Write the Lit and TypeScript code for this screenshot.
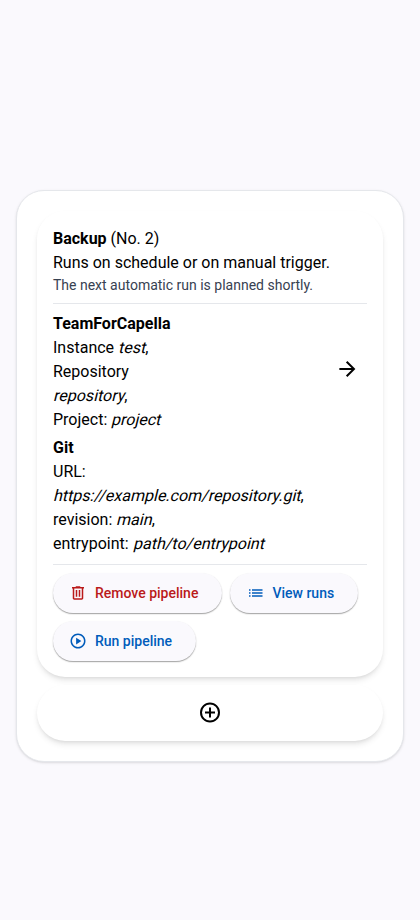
import { LitElement, html, css } from "lit";
import { customElement } from "lit/decorators.js";

@customElement("app-root")
export class AppRoot extends LitElement {
  static styles = css`
    :host {
      display: flex;
      flex-direction: column;
      justify-content: center;
      box-sizing: border-box;
      height: 920px;
      padding: 32px 16px 0;
      background: #faf9fd;
      color: #000;
      font: 16px/24px Roboto, sans-serif;
    }
    * { box-sizing: border-box; }
    .dialog {
      border: 1px solid #e5e7eb;
      border-radius: 28px;
      background: #fff;
      padding: 20px;
      box-shadow: 0 1px 3px rgba(0, 0, 0, 0.1), 0 1px 2px -1px rgba(0, 0, 0, 0.1);
    }
    .card {
      border-radius: 28px;
      padding: 16px;
      background: #fff;
      box-shadow: 0 4px 6px -1px rgba(0, 0, 0, 0.1), 0 2px 4px -2px rgba(0, 0, 0, 0.1);
    }
    .small { font-size: 14px; line-height: 20px; color: #374151; }
    .flow {
      margin: 8px 0;
      padding: 8px 0;
      border-top: 1px solid #e5e7eb;
      border-bottom: 1px solid #e5e7eb;
    }
    .source {
      display: flex;
      align-items: center;
      justify-content: space-between;
      padding-right: 8px;
    }
    .source + .source { margin-top: 4px; }
    .source svg { margin-bottom: 6px; }
    b { font-weight: 700; }
    i {
      display: inline-block;
      font-style: normal;
      transform: skewX(-14deg);
      transform-origin: 0 17px;
    }
    svg { display: block; width: 24px; height: 24px; fill: currentColor; }
    .actions { display: flex; flex-wrap: wrap; gap: 8px; }
    button {
      display: flex;
      align-items: center;
      gap: 8px;
      height: 40px;
      border: 0;
      border-radius: 20px;
      padding: 0 24px 0 16px;
      background: #faf9fd;
      color: #005cbb;
      font: 500 14px/20px Roboto, sans-serif;
      box-shadow: 0 1px 1px rgba(0, 0, 0, 0.28), 0 1px 2px rgba(0, 0, 0, 0.12);
    }
    button svg { width: 18px; height: 18px; }
    .danger { color: #ba1a1a; }
    .add { display: flex; justify-content: center; margin-top: 8px; }
  `;

  render() {
    return html`
      <div class="dialog">
        <div class="card">
          <div><b>Backup</b> (No. 2)</div>
          <div>Runs on schedule or on manual trigger.</div>
          <div class="small">The next automatic run is planned shortly.</div>
          <div class="flow">
            <div class="source">
              <div>
                <b>TeamForCapella</b><br />Instance <i>test</i>,<br />Repository<br /><i>repository</i>,<br />Project: <i>project</i>
              </div>
              <svg viewBox="-15 -960 960 960"><path d="M647-440H160v-80h487L423-744l57-56 320 320-320 320-57-56 224-224Z" /></svg>
            </div>
            <div class="source">
              <div>
                <b>Git</b><br />URL:<br /><i>https://example.com/repository.git</i>,<br />revision: <i>main</i>,<br />entrypoint: <i>path/to/entrypoint</i>
              </div>
            </div>
          </div>
          <div class="actions">
            <button class="danger">
              <svg viewBox="0 -960 960 960"><path d="M280-120q-33 0-56.500-23.500T200-200v-520h-40v-80h200v-40h240v40h200v80h-40v520q0 33-23.500 56.500T680-120H280Zm400-600H280v520h400v-520ZM360-280h80v-360h-80v360Zm160 0h80v-360h-80v360ZM280-720v520-520Z" /></svg>
              Remove pipeline
            </button>
            <button>
              <svg viewBox="-40 -960 960 960"><path d="M280-600v-80h560v80H280Zm0 160v-80h560v80H280Zm0 160v-80h560v80H280ZM120-600v-80h80v80h-80Zm0 160v-80h80v80h-80Zm0 160v-80h80v80h-80Z" /></svg>
              View runs
            </button>
            <button>
              <svg viewBox="0 -960 960 960"><path d="m380-300 280-180-280-180v360ZM480-80q-83 0-156-31.500T197-197q-54-54-85.500-127T80-480q0-83 31.500-156T197-763q54-54 127-85.500T480-880q83 0 156 31.500T763-763q54 54 85.500 127T880-480q0 83-31.500 156T763-197q-54 54-127 85.500T480-80Zm0-80q134 0 227-93t93-227q0-134-93-227t-227-93q-134 0-227 93t-93 227q0 134 93 227t227 93Z" /></svg>
              Run pipeline
            </button>
          </div>
        </div>
        <div class="card add">
          <svg viewBox="0 -940 960 960"><path d="M440-280h80v-160h160v-80H520v-160h-80v160H280v80h160v160Zm40 200q-83 0-156-31.500T197-197q-54-54-85.500-127T80-480q0-83 31.500-156T197-763q54-54 127-85.500T480-880q83 0 156 31.500T763-763q54 54 85.500 127T880-480q0 83-31.500 156T763-197q-54 54-127 85.500T480-80Zm0-80q134 0 227-93t93-227q0-134-93-227t-227-93q-134 0-227 93t-93 227q0 134 93 227t227 93Z" /></svg>
        </div>
      </div>
    `;
  }
}
